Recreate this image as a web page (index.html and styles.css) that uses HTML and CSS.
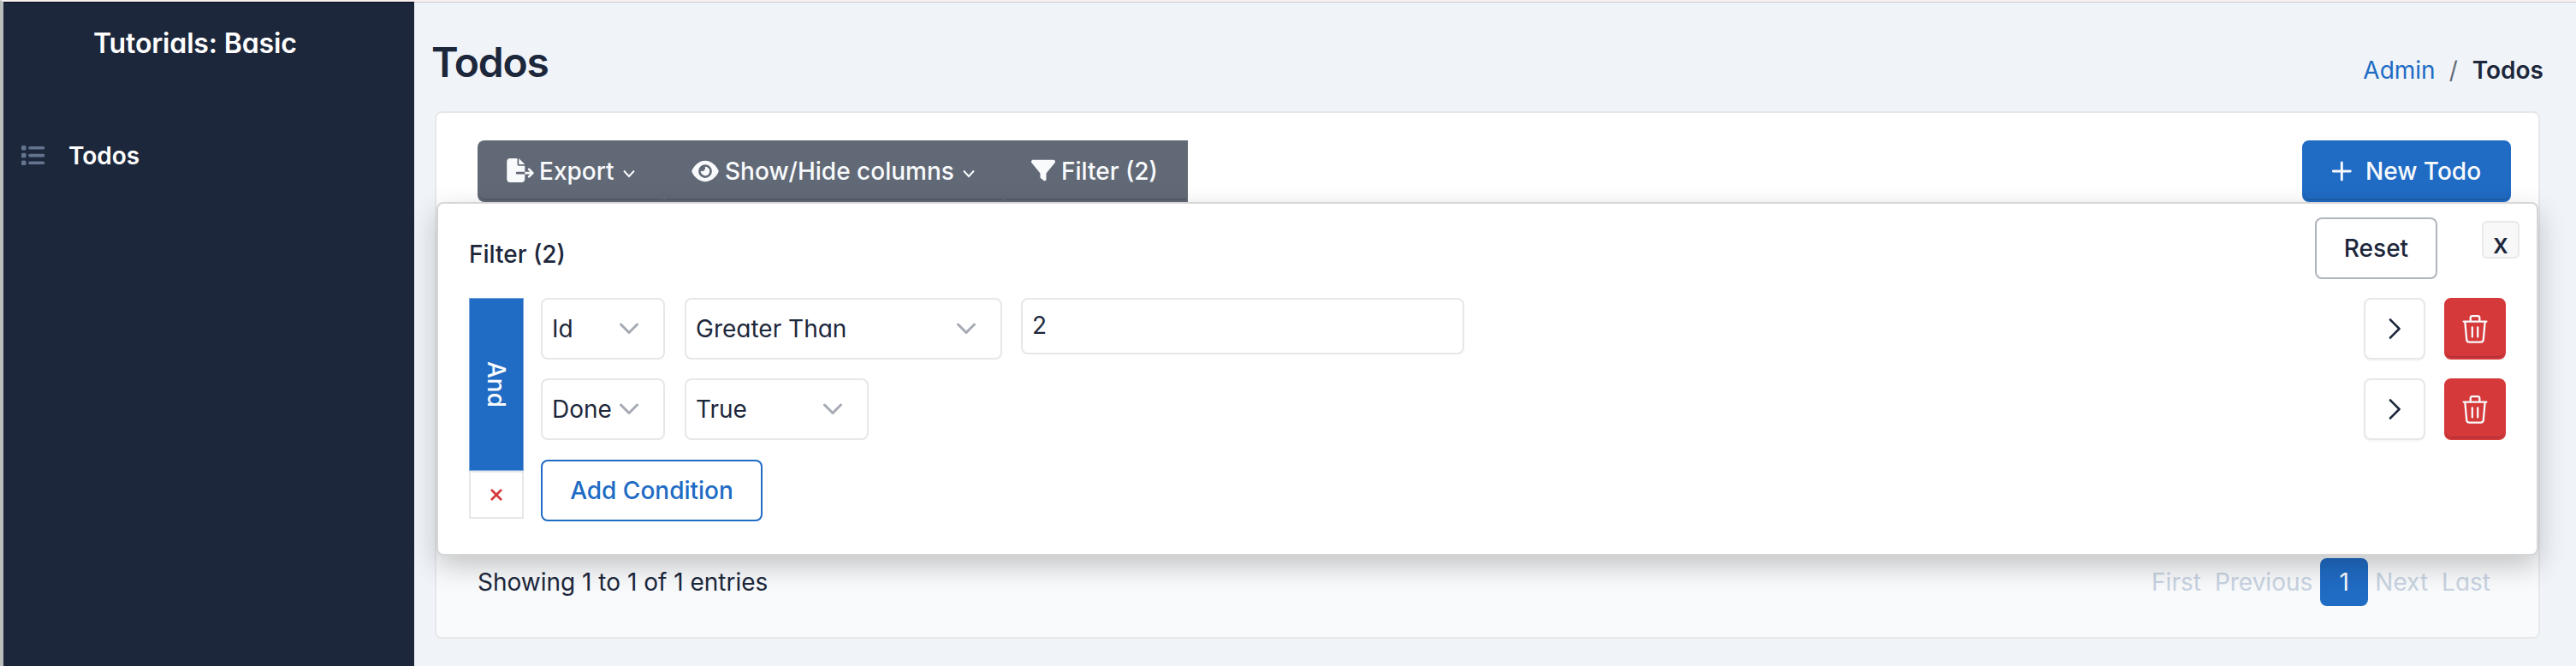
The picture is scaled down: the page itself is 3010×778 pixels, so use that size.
FILE: index.html
```html
<!DOCTYPE html>
<html lang="en">
<head>
<meta charset="utf-8">
<title>Todos</title>
<link rel="stylesheet" href="styles.css">
</head>
<body>
<div class="app">
  <aside class="sidebar">
    <div class="brand">Tutorials: Basic</div>
    <a class="nav-item">
      <svg class="nav-icon" width="28" height="30" viewBox="0 0 28 30"><g fill="#64748f"><rect x="0" y="3" width="5.500" height="5.500" rx="1.500"/><rect x="0" y="11.800" width="5.500" height="5.500" rx="1.500"/><rect x="0" y="20.500" width="5.500" height="5.500" rx="1.500"/><rect x="8.200" y="4" width="19" height="3.600" rx="1.700"/><rect x="8.200" y="12.800" width="19" height="3.600" rx="1.700"/><rect x="8.200" y="21.500" width="19" height="3.600" rx="1.700"/></g></svg>
      <span>Todos</span>
    </a>
  </aside>
  <main class="main">
    <header class="page-header">
      <h1 class="page-title">Todos</h1>
      <nav class="breadcrumb"><a class="crumb-link">Admin</a><span class="crumb-sep">/</span><span class="crumb-active">Todos</span></nav>
    </header>
    <section class="card">
      <div class="toolbar">
        <div class="btn-group">
          <button class="btn-dark btn-export">
            <svg class="icon-file" width="32" height="28" viewBox="0 0 576 512"><path fill="currentColor" d="M0 64C0 28.700 28.700 0 64 0H224V128c0 17.700 14.300 32 32 32H384V288H216c-13.300 0-24 10.700-24 24s10.700 24 24 24H384V448c0 35.300-28.700 64-64 64H64c-35.300 0-64-28.700-64-64V64zM384 336V288H494.100l-39-39c-9.400-9.400-9.400-24.600 0-33.900s24.600-9.400 33.900 0l80 80c9.400 9.400 9.400 24.600 0 33.900l-80 80c-9.400 9.400-24.600 9.400-33.900 0s-9.400-24.600 0-33.900l39-39H384zm0-208H256V0L384 128z"/></svg>
            <span>Export</span>
            <svg class="caret" width="14" height="10" viewBox="0 0 14 10"><path d="M1 1.500l6 6.500 6-6.500" fill="none" stroke="currentColor" stroke-width="2"/></svg>
          </button>
          <button class="btn-dark btn-columns">
            <svg class="icon-eye" width="32" height="28" viewBox="0 0 576 512"><path fill="currentColor" d="M288 32c-80.800 0-145.500 36.800-192.600 80.600C48.600 156 17.300 208 2.500 243.700c-3.300 7.900-3.300 16.700 0 24.600C17.300 304 48.600 356 95.400 399.400C142.500 443.200 207.200 480 288 480s145.500-36.800 192.600-80.600c46.800-43.500 78.100-95.400 93-131.100c3.300-7.900 3.300-16.700 0-24.600c-14.900-35.700-46.200-87.700-93-131.100C433.500 68.800 368.800 32 288 32zM144 256a144 144 0 1 1 288 0 144 144 0 1 1-288 0zm144-64c0 35.300-28.700 64-64 64c-7.100 0-13.900-1.200-20.300-3.300c-5.500-1.800-11.900 1.600-11.700 7.400c.3 6.900 1.300 13.800 3.200 20.700c13.700 51.200 66.400 81.600 117.600 67.900s81.600-66.400 67.900-117.600c-11.100-41.500-47.800-69.400-88.600-71.100c-5.800-.2-9.200 6.100-7.400 11.700c2.100 6.400 3.300 13.200 3.300 20.300z"/></svg>
            <span>Show/Hide columns</span>
            <svg class="caret" width="14" height="10" viewBox="0 0 14 10"><path d="M1 1.500l6 6.500 6-6.500" fill="none" stroke="currentColor" stroke-width="2"/></svg>
          </button>
          <button class="btn-dark btn-filter">
            <svg class="icon-filter" width="28" height="28" viewBox="0 0 512 512"><path fill="currentColor" d="M3.900 54.900C10.500 40.900 24.500 32 40 32H472c15.500 0 29.500 8.900 36.100 22.900s4.600 30.500-5.200 42.500L320 320.900V448c0 12.100-6.800 23.200-17.700 28.600s-23.800 4.300-33.500-3l-64-48c-8.100-6-12.800-15.500-12.800-25.600V320.900L9 97.300C-.7 85.400-2.800 68.800 3.900 54.900z"/></svg>
            <span>Filter (2)</span>
          </button>
        </div>
        <button class="btn-primary">
          <svg width="24" height="24" viewBox="0 0 24 24"><path d="M12.300 2v20M2.300 12h20" fill="none" stroke="currentColor" stroke-width="2.900" stroke-linecap="round"/></svg>
          <span>New Todo</span>
        </button>
      </div>
      <footer class="card-footer">
        <span class="entries">Showing 1 to 1 of 1 entries</span>
        <div class="pagination"><span class="page-first">First</span><span class="page-prev">Previous</span><span class="page-current">1</span><span class="page-next">Next</span><span>Last</span></div>
      </footer>
      <div class="filter-panel">
        <div class="panel-head">
          <span class="panel-title">Filter (2)</span>
          <button class="btn-reset">Reset</button>
          <button class="btn-close">x</button>
        </div>
        <div class="builder">
          <div class="logic">
            <button class="logic-and"><span>And</span></button>
            <button class="logic-clear"><svg width="14" height="14" viewBox="0 0 14 14"><path d="M1.800 1.800l10.400 10.400M12.200 1.800L1.800 12.200" stroke="#d63939" stroke-width="2.700" stroke-linecap="round"/></svg></button>
          </div>
          <div class="criteria">
            <div class="criterion">
              <div class="select select-field"><span>Id</span><svg class="chevron" width="24" height="14" viewBox="0 0 24 14"><path d="M2.500 2l9.500 9.500L21.500 2"/></svg></div>
              <div class="select select-wide"><span>Greater Than</span><svg class="chevron" width="24" height="14" viewBox="0 0 24 14"><path d="M2.500 2l9.500 9.500L21.500 2"/></svg></div>
              <div class="input">2</div>
              <div class="actions">
                <button class="btn-move"><svg width="16" height="26" viewBox="0 0 16 26"><path d="M3 2.500L13.500 13 3 23.500" fill="none" stroke="currentColor" stroke-width="2.600" stroke-linecap="round" stroke-linejoin="round"/></svg></button>
                <button class="btn-delete"><svg width="30" height="34" viewBox="0 0 30 34"><g fill="none" stroke="currentColor" stroke-width="2.300" stroke-linecap="round" stroke-linejoin="round"><path d="M1.600 8.600h26.800M9.700 8.600V4.300q0-2.200 2.200-2.200h6.200q2.200 0 2.200 2.200v4.300M3.300 8.600l1.900 21q.3 3 3.200 3h13.200q2.900 0 3.200-3l1.900-21M11.800 15.500v11M18.200 15.500v11"/></g></svg></button>
              </div>
            </div>
            <div class="criterion">
              <div class="select select-field"><span>Done</span><svg class="chevron" width="24" height="14" viewBox="0 0 24 14"><path d="M2.500 2l9.500 9.500L21.500 2"/></svg></div>
              <div class="select select-value"><span>True</span><svg class="chevron" width="24" height="14" viewBox="0 0 24 14"><path d="M2.500 2l9.500 9.500L21.500 2"/></svg></div>
              <div class="actions">
                <button class="btn-move"><svg width="16" height="26" viewBox="0 0 16 26"><path d="M3 2.500L13.500 13 3 23.500" fill="none" stroke="currentColor" stroke-width="2.600" stroke-linecap="round" stroke-linejoin="round"/></svg></button>
                <button class="btn-delete"><svg width="30" height="34" viewBox="0 0 30 34"><g fill="none" stroke="currentColor" stroke-width="2.300" stroke-linecap="round" stroke-linejoin="round"><path d="M1.600 8.600h26.800M9.700 8.600V4.300q0-2.200 2.200-2.200h6.200q2.200 0 2.200 2.200v4.300M3.300 8.600l1.900 21q.3 3 3.200 3h13.200q2.900 0 3.200-3l1.900-21M11.800 15.500v11M18.200 15.500v11"/></g></svg></button>
              </div>
            </div>
            <button class="btn-add">Add Condition</button>
          </div>
        </div>
      </div>
    </section>
  </main>
</div>
</body>
</html>
```
FILE: styles.css
```css
* { box-sizing: border-box; }
body {
  margin: 0;
  font-family: Inter, "Liberation Sans", sans-serif;
  font-size: 28px;
  line-height: 40px;
  font-feature-settings: "cv03", "cv04", "cv11";
  color: #1d273b;
  background: #f0f4f9;
}
button {
  font: inherit;
  font-feature-settings: inherit;
  color: inherit;
  margin: 0;
  padding: 0;
  background: none;
  border: 0;
  white-space: nowrap;
}
svg { flex: none; display: block; }
.app {
  display: flex;
  height: 778px;
  overflow: hidden;
  border-top: 2px solid #f9efef;
  border-left: 4px solid #b9bdbc;
}
.sidebar {
  width: 480px;
  flex: none;
  background: #1d273b;
  border-top: 1px solid #050d20;
  color: #fff;
}
.brand {
  padding: 26px 0 0 105px;
  font-size: 32px;
  line-height: 44px;
  font-weight: 600;
  letter-spacing: -0.15px;
}
.nav-item { display: flex; align-items: center; margin-top: 89px; padding-left: 21px; height: 40px; font-weight: 600; }
.nav-icon { margin-right: 27px; }
.main { flex: 1; border-top: 1px solid #c9ced8; }
.page-header { display: flex; justify-content: space-between; height: 127px; padding: 42px 38px 0 20px; }
.page-title { margin: 0; font-size: 48px; line-height: 56px; font-weight: 600; letter-spacing: -1.2px; }
.breadcrumb { display: flex; padding-top: 17px; }
.crumb-link { color: #206bc4; }
.crumb-sep { padding: 0 17px 0 16px; color: #626976; }
.crumb-active { font-weight: 600; }
.card {
  position: relative;
  height: 616px;
  width: 2460px;
  margin-left: 24px;
  background: #fff;
  border: 2px solid #e6e7e9;
  border-radius: 8px;
  display: flex;
  flex-direction: column;
  justify-content: space-between;
}
.toolbar { display: flex; justify-content: space-between; padding: 32px 32px 0 48px; }
.btn-group { display: flex; height: 72px; }
.btn-dark {
  display: flex;
  align-items: center;
  height: 72px;
  padding-left: 32px;
  border: 2px solid #626976;
  border-right-width: 0;
  background: #626976;
  color: #f8fafc;
  font-weight: 500;
  box-shadow: inset 0 -2px 0 #565c69;
}
.btn-export { width: 217px; border-radius: 8px 0 0 8px; }
.btn-columns { padding-left: 31px; width: 397px; }
.btn-filter { padding-left: 31px; width: 216px; border-right-width: 2px; }
.icon-file { margin: -2px 6px 0 0; }
.icon-eye { margin: -1px 7px 0 0; }
.icon-filter { margin: -2px 7px 0 0; }
.caret { margin: 6px 0 0 10px; }
.btn-primary {
  display: flex;
  align-items: center;
  gap: 16px;
  width: 244px;
  height: 72px;
  padding-left: 32px;
  border: 2px solid #206bc4;
  border-radius: 8px;
  background: #206bc4;
  box-shadow: inset 0 -2px 0 #1d5eac;
  color: #f8fafc;
  font-weight: 500;
}
.card-footer {
  display: flex;
  justify-content: space-between;
  height: 128px;
  padding: 36px 56px 0 48px;
  background: #f8fafc;
  border-radius: 0 0 6px 6px;
}
.pagination { display: flex; color: #c8d3e1; }
.entries, .pagination > span { line-height: 56px; }
.page-first { margin-right: 16px; }
.page-prev { margin-right: 9px; }
.page-current { width: 56px; height: 56px; text-align: center; border-radius: 8px; background: #206bc4; color: #f8fafc; margin-right: 8px; }
.page-next { margin-right: 16px; }
.filter-panel {
  position: absolute;
  left: 0;
  top: 104px;
  width: 2456px;
  height: 413px;
  padding: 0 36px;
  background: #fff;
  border: 2px solid #d6d6d6;
  border-radius: 8px;
  box-shadow: 0 12px 32px rgba(0, 0, 0, 0.22);
}
.panel-head { display: flex; align-items: flex-start; height: 110px; padding-top: 16px; }
.panel-title { padding-top: 23px; flex: 1; font-weight: 500; }
.btn-reset { width: 143px; height: 72px; margin-right: 52px; border: 2px solid #b0b4bc; border-radius: 8px; font-weight: 500; }
.btn-close {
  width: 44px;
  height: 44px;
  margin: 4px -16px 0 0;
  padding-top: 9px;
  border: 2px solid #e9e9e9;
  border-radius: 6px;
  background: #f8f8f8;
  font-size: 32px;
  font-weight: 500;
  line-height: 31px;
}
.builder { display: flex; gap: 20px; }
.logic { width: 64px; height: 258px; display: flex; flex-direction: column; }
.logic-and { height: 202px; border: 1px solid #74a3db; background: #206bc4; color: #f8fafc; display: flex; align-items: center; justify-content: center; }
.logic-and span { writing-mode: vertical-rl; font-weight: 500; }
.logic-clear { height: 56px; border: 2px solid #e6e7e9; display: flex; align-items: center; justify-content: center; }
.criteria { flex: 1; display: flex; flex-direction: column; align-items: flex-start; gap: 22px; }
.criterion { display: flex; align-items: flex-start; gap: 23px; width: 100%; height: 72px; }
.select { display: flex; align-items: center; justify-content: space-between; height: 72px; padding: 0 28px 0 11px; border: 2px solid #e6e7e9; border-radius: 8px; }
.chevron { fill: none; stroke: #a5aab3; stroke-width: 3; stroke-linecap: round; stroke-linejoin: round; }
.select-field { width: 145px; }
.select-wide { width: 371px; }
.select-value { width: 215px; }
.input { width: 518px; height: 66px; margin-left: -1px; padding: 10px 11px; border: 2px solid #e6e7e9; border-radius: 8px; }
.actions { display: flex; gap: 22px; margin-left: auto; }
.btn-move, .btn-delete { width: 72px; height: 72px; display: flex; align-items: center; justify-content: center; border-radius: 8px; }
.btn-move { border: 2px solid #e6e7e9; box-shadow: 0 2px 0 #f6f7f8; }
.btn-delete { border: 2px solid #d63939; background: #d63939; color: #f8fafc; box-shadow: inset 0 -2px 0 #b53238; }
.btn-add { width: 259px; height: 72px; margin-top: 1px; border: 2px solid #206bc4; border-radius: 8px; color: #206bc4; font-weight: 500; }
```
